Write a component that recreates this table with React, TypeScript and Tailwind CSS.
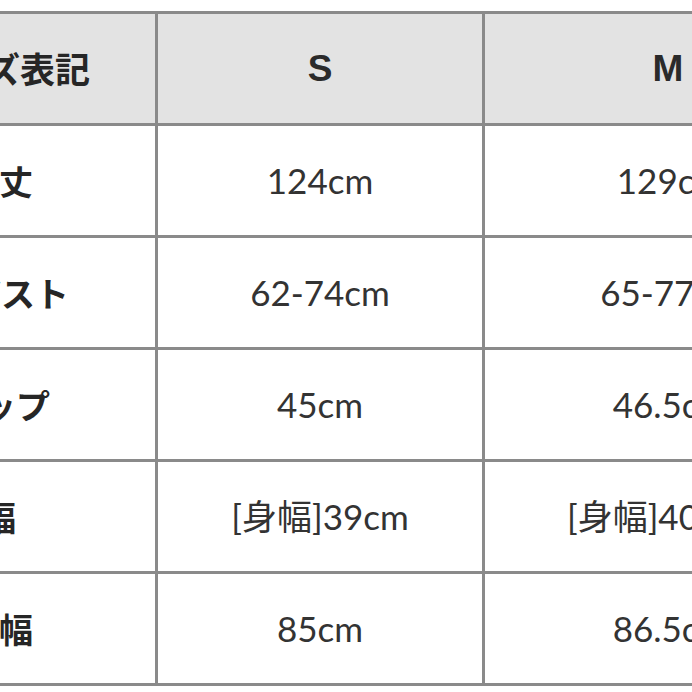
type Row = {
  label: string;
  shift?: string;
  s: string;
  m: string;
};

const rows: Row[] = [
  { label: "着丈", s: "124cm", m: "129cm" },
  { label: "バスト", shift: "pl-[38px]", s: "62-74cm", m: "65-77cm" },
  { label: "ヒップ", s: "45cm", m: "46.5cm" },
  { label: "身幅", shift: "pr-[34px]", s: "[身幅]39cm", m: "[身幅]40.5cm" },
  { label: "裾幅", s: "85cm", m: "86.5cm" },
];

const jp = "font-['Noto_Sans_CJK_JP',sans-serif]";
const val = "font-['Lato','Noto_Sans_CJK_JP',sans-serif]";

export default function App() {
  return (
    <div className="w-[692px] h-[692px] overflow-hidden bg-white pt-[11px]">
      <div className="ml-[-157px] w-max grid grid-cols-[312px_324px_370px] auto-rows-[109px] gap-[3px] bg-[#8a8a8a] border-y-[3px] border-[#8a8a8a]">
        <div className="bg-[#e3e3e3] flex items-center justify-center pl-[8px]">
          <span className={`${jp} text-[35px] font-bold text-[#262626]`}>
            サイズ表記
          </span>
        </div>
        <div className="bg-[#e3e3e3] flex items-center justify-center">
          <span className="font-['Liberation_Sans',sans-serif] text-[37px] font-bold text-[#2a2a2a]">
            S
          </span>
        </div>
        <div className="bg-[#e3e3e3] flex items-center justify-center pr-[4px]">
          <span className="font-['Liberation_Sans',sans-serif] text-[37px] font-bold text-[#2a2a2a]">
            M
          </span>
        </div>

        {rows.map((r) => (
          <>
            <div
              key={r.label + "-l"}
              className={`bg-white flex items-center justify-center ${r.shift ?? ""}`}
            >
              <span className={`${jp} text-[34px] font-bold text-[#262626]`}>
                {r.label}
              </span>
            </div>
            <div key={r.label + "-s"} className="bg-white flex items-center justify-center">
              <span className={`${val} text-[35px] text-[#333333]`}>{r.s}</span>
            </div>
            <div key={r.label + "-m"} className="bg-white flex items-center justify-center">
              <span className={`${val} text-[35px] text-[#333333]`}>{r.m}</span>
            </div>
          </>
        ))}
      </div>
    </div>
  );
}
